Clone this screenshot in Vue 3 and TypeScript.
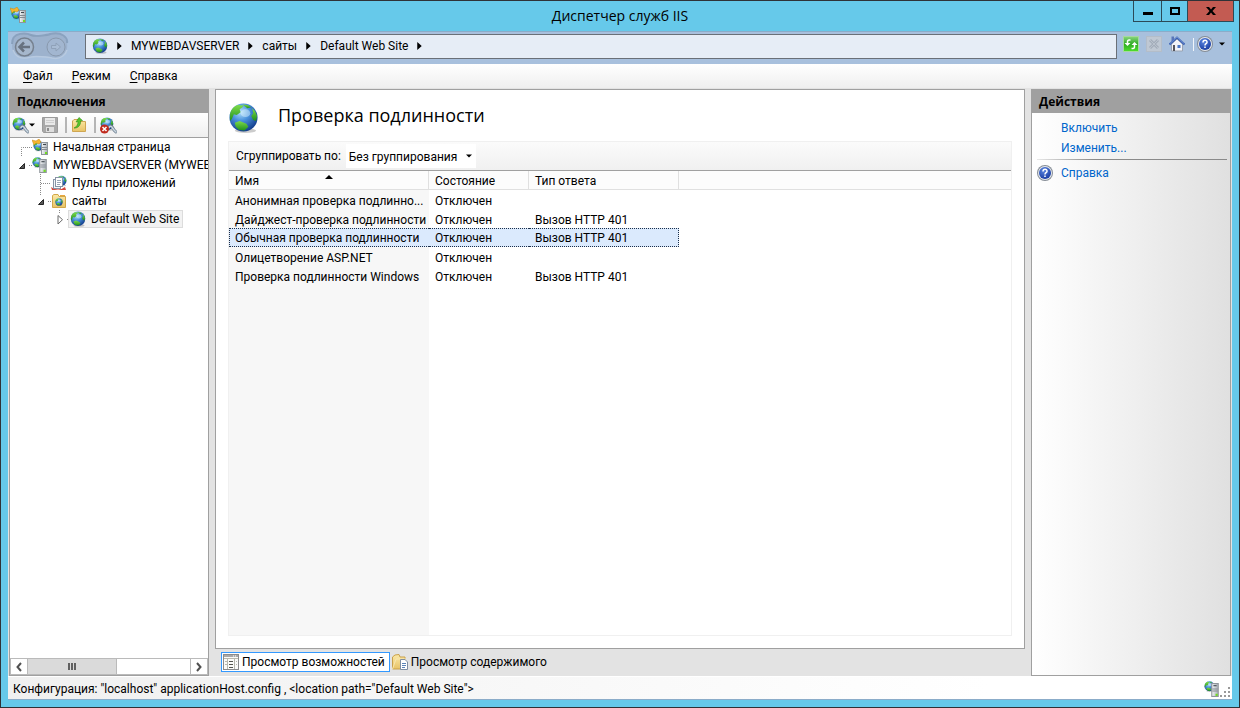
<script setup lang="ts">
import { ref } from 'vue'

interface TreeNode {
  label: string
  icon: string
  level: number
  twig: string
  state: 'open' | 'closed' | 'leaf'
}
interface AuthMethod {
  name: string
  state: string
  response: string
}

const crumbs = ['MYWEBDAVSERVER', 'сайты', 'Default Web Site']
const menus = [
  { key: 'Ф', rest: 'айл' },
  { key: 'Р', rest: 'ежим' },
  { key: 'С', rest: 'правка' },
]
const nodes: TreeNode[] = [
  { label: 'Начальная страница', icon: 'home-server', level: 0, twig: 'M2.5 18V9.5H13', state: 'leaf' },
  { label: 'MYWEBDAVSERVER (MYWEBDAVSERVER\\admin)', icon: 'server', level: 0, twig: 'M10 9.5H13', state: 'open' },
  { label: 'Пулы приложений', icon: 'pools', level: 1, twig: 'M2.5 0V18M3 9.5H13', state: 'leaf' },
  { label: 'сайты', icon: 'sites', level: 1, twig: 'M10 9.5H13M2.5 0V4', state: 'open' },
  { label: 'Default Web Site', icon: 'globe', level: 2, twig: 'M10 9.5H13M2.5 0V3', state: 'closed' },
]
const methods: AuthMethod[] = [
  { name: 'Анонимная проверка подлинно...', state: 'Отключен', response: '' },
  { name: 'Дайджест-проверка подлинности', state: 'Отключен', response: 'Вызов HTTP 401' },
  { name: 'Обычная проверка подлинности', state: 'Отключен', response: 'Вызов HTTP 401' },
  { name: 'Олицетворение ASP.NET', state: 'Отключен', response: '' },
  { name: 'Проверка подлинности Windows', state: 'Отключен', response: 'Вызов HTTP 401' },
]
const selectedNode = ref(4)
const selectedMethod = ref(2)
const grouping = ref('none')
const view = ref('features')
</script>

<template>
  <svg class="defs" width="0" height="0" aria-hidden="true">
    <defs>
      <radialGradient id="sea" cx="0.4" cy="0.3" r="0.7">
        <stop offset="0" stop-color="#b5e2fb" />
        <stop offset="0.45" stop-color="#4a92dc" />
        <stop offset="1" stop-color="#143f8e" />
      </radialGradient>
      <linearGradient id="land" x1="0" y1="0" x2="0" y2="1">
        <stop offset="0" stop-color="#7fdc4a" />
        <stop offset="1" stop-color="#1f8f1c" />
      </linearGradient>
      <linearGradient id="steel" x1="0" y1="0" x2="1" y2="0">
        <stop offset="0" stop-color="#f4f6f8" />
        <stop offset="1" stop-color="#a8afb6" />
      </linearGradient>
      <linearGradient id="paper-gold" x1="0" y1="0" x2="0" y2="1">
        <stop offset="0" stop-color="#fbe9a8" />
        <stop offset="1" stop-color="#e8c366" />
      </linearGradient>
      <linearGradient id="refresh-green" x1="0" y1="0" x2="0" y2="1">
        <stop offset="0" stop-color="#8ad67e" />
        <stop offset="0.5" stop-color="#2faa22" />
        <stop offset="1" stop-color="#4fe02c" />
      </linearGradient>
      <radialGradient id="help-blue" cx="0.4" cy="0.3" r="0.8">
        <stop offset="0" stop-color="#5b86e0" />
        <stop offset="1" stop-color="#12349c" />
      </radialGradient>
    </defs>
    <symbol id="globe" viewBox="0 0 32 32">
      <ellipse cx="18" cy="29" rx="11" ry="2.5" fill="#000" opacity="0.2" />
      <circle cx="16" cy="15.5" r="14.5" fill="url(#sea)" />
      <path d="M2 12C3 7 6 4 10 2.500L16 3L15 5L12 7L13 10L9 13L6 12L4 17L2 19Z" fill="url(#land)" />
      <path d="M15 2L20 2.500L24 5L20 6Z" fill="url(#land)" />
      <path d="M25 6L28 9L30 14L29 19L26 18L24 14L26 11Z" fill="url(#land)" />
      <path d="M7 21L12 19L19 22L21 25L17 29L11 28L8 25Z" fill="url(#land)" />
      <ellipse cx="18" cy="11" rx="5" ry="4" fill="#e3f6ff" opacity="0.45" />
    </symbol>
    <symbol id="tower" viewBox="0 0 7 13">
      <rect x="0.5" y="0.5" width="6" height="12" fill="url(#steel)" stroke="#8f959b" />
      <path d="M2 2.5H5" stroke="#3f464d" />
      <path d="M1 5.5H6M1 7.5H6" stroke="#858c93" />
      <rect x="4" y="10" width="2" height="2" fill="#6fdc1e" />
    </symbol>
    <symbol id="server" viewBox="0 0 16 16">
      <use href="#globe" x="0" y="0" width="11" height="11" />
      <use href="#tower" x="7" y="2" width="8" height="14" />
    </symbol>
    <symbol id="home-server" viewBox="0 0 16 16">
      <use href="#globe" x="1" y="1" width="11" height="12" />
      <path d="M0 1L4 2L7 0L9 3L7 5L4 4L2 6Z" fill="#f5b72e" stroke="#c9821a" stroke-width="0.5" />
      <use href="#tower" x="9" y="3" width="7" height="13" />
    </symbol>
    <symbol id="pools" viewBox="0 0 16 16">
      <use href="#globe" x="5" y="0" width="11" height="12" />
      <path d="M0 12Q7 17 14 12L15 15H1Z" fill="#d4483e" />
      <rect x="2.5" y="4.500" width="7" height="9" fill="#f4f6f9" stroke="#8793a5" />
      <rect x="4.500" y="2.500" width="7" height="9" fill="#fff" stroke="#8793a5" />
      <path d="M6 5.500H10M6 7.500H10M6 9.500H9" stroke="#9aa6b6" />
    </symbol>
    <symbol id="sites" viewBox="0 0 16 16">
      <path d="M1.5 14.500V2.500L3 1.500H7L8 3.500H14.500V14.500Z" fill="url(#paper-gold)" stroke="#d3a748" />
      <path d="M9 2.500H14" stroke="#e8a63e" />
      <use href="#globe" x="4" y="5" width="8" height="8" />
    </symbol>
    <symbol id="connect" viewBox="0 0 17 17">
      <use href="#globe" x="0" y="0" width="14" height="14" />
      <path d="M8 11Q11 7 12.500 10.500L14 13L16 15" fill="none" stroke="#6d7d8d" stroke-width="3" stroke-linecap="round" />
      <path d="M9 10.500Q11 8 12.500 11L14 13L16 15" fill="none" stroke="#cbd8e2" stroke-width="1.500" stroke-linecap="round" />
    </symbol>
    <symbol id="help" viewBox="0 0 16 16">
      <circle cx="8" cy="8" r="8" fill="#868d96" />
      <circle cx="8" cy="8" r="7" fill="#e5e9ee" />
      <circle cx="8" cy="8" r="6" fill="url(#help-blue)" />
      <path d="M6 6.500C6 3.500 10.300 3.700 10 6.300C9.800 7.800 8 7.700 8 9.500M8 10.500V12" fill="none" stroke="#fff" stroke-width="1.500" />
    </symbol>
    <symbol id="right" viewBox="0 0 5 9"><path d="M0 0L5 4.500L0 9Z" /></symbol>
    <symbol id="down" viewBox="0 0 6 4"><path d="M0 0.500H6L3 3.500Z" /></symbol>
  </svg>

  <div class="window">
    <header class="title-bar">
      <svg class="icon app-icon"><use href="#home-server" /></svg>
      <h1>Диспетчер служб IIS</h1>
      <div class="window-buttons">
        <button type="button" aria-label="Свернуть"><svg width="12" height="12"><path d="M1 7H11V10H1Z" /></svg></button>
        <button type="button" aria-label="Развернуть"><svg width="12" height="12"><path d="M2 3H10V9H2Z" fill="none" stroke="#000" stroke-width="2" /></svg></button>
        <button type="button" class="close" aria-label="Закрыть"><svg width="12" height="12"><path d="M1 2H4L6 4.500L8 2H11L7.500 6L11 10H8L6 7.500L4 10H1L4.500 6Z" /></svg></button>
      </div>
    </header>

    <nav class="address-bar" aria-label="Адрес">
      <div class="history">
        <svg width="58" height="28" viewBox="0 0 58 28">
          <path d="M13 2C19 2 20 4 29 4S39 2 45 2C60 2 60 26 45 26C39 26 37 24 29 24S19 26 13 26C-3 26 -3 2 13 2Z" fill="#9db2cd" />
          <path d="M1 12C1 -1 16 1 20 3S37 3 39 2C51 -1 57 6 56 11" fill="none" stroke="#7d95b2" stroke-width="2" opacity="0.7" />
          <path d="M2 18C6 29 16 26 20 25S38 25 41 26C50 28 55 22 56 18" fill="none" stroke="#b8cae0" stroke-width="1.500" />
          <circle cx="13.500" cy="15" r="9" fill="#a6b7cc" stroke="#76818f" stroke-width="1.500" />
          <path d="M19 15H9M13 10.500L8.500 15L13 19.500" fill="none" stroke="#68727f" stroke-width="2.500" />
          <circle cx="45" cy="15" r="9" fill="#a2b6d0" stroke="#8999ad" />
          <path d="M40.500 13.500H45V11L49.500 15L45 19V16.500H40.500Z" fill="#a9bcd4" stroke="#8fa1b8" />
        </svg>
      </div>
      <div class="path">
        <svg class="icon"><use href="#globe" /></svg>
        <template v-for="crumb in crumbs" :key="crumb">
          <svg class="step"><use href="#right" /></svg>
          <button type="button">{{ crumb }}</button>
        </template>
        <svg class="step"><use href="#right" /></svg>
      </div>
      <div class="address-tools">
        <button type="button" aria-label="Обновить">
          <svg class="icon" viewBox="0 0 16 16">
            <rect x="0.5" y="0.5" width="15" height="15" fill="url(#refresh-green)" stroke="#a5d99d" />
            <path d="M7.500 4H6Q4.500 4 4.500 6V8" fill="none" stroke="#fff" stroke-width="1.500" />
            <path d="M1.500 7H7.500L4.500 10Z" fill="#fff" />
            <path d="M8.500 12.500H10Q11.500 12.500 11.500 10.500V8" fill="none" stroke="#fff" stroke-width="1.500" />
            <path d="M8.500 9H14.500L11.500 6Z" fill="#fff" />
          </svg>
        </button>
        <button type="button" aria-label="Остановить">
          <svg class="icon" viewBox="0 0 16 16">
            <rect x="0.500" y="0.500" width="15" height="15" fill="#bfc8d3" stroke="#b3bdc9" />
            <path d="M4 4L12 12M12 4L4 12" stroke="#a3adba" stroke-width="3" />
            <path d="M4 4L12 12M12 4L4 12" stroke="#b9c2cd" />
          </svg>
        </button>
        <button type="button" aria-label="Домой">
          <svg class="icon" viewBox="0 0 16 16">
            <path d="M2.500 8V15H13.500V8L8 3Z" fill="#f1f3f8" stroke="#9aa3b2" />
            <path d="M2.500 0.500H5V5H2.500Z" fill="#5a76b8" />
            <path d="M0.500 8.500L8 1.500L15.500 8.500" fill="none" stroke="#3c62b4" stroke-width="2" />
            <path d="M1 7.500L8 1L15 7.500" fill="none" stroke="#9db8e8" stroke-width="0.500" />
            <rect x="4" y="9" width="2" height="6" fill="#54545c" />
            <rect x="8.500" y="9" width="3" height="3" fill="#4a76c6" />
          </svg>
        </button>
        <span class="divider"></span>
        <button type="button" class="help-menu" aria-label="Справка">
          <svg class="icon"><use href="#help" /></svg>
          <svg class="drop"><use href="#down" /></svg>
        </button>
      </div>
    </nav>

    <nav class="menu-bar" aria-label="Меню">
      <button v-for="menu in menus" :key="menu.key" type="button"><u>{{ menu.key }}</u>{{ menu.rest }}</button>
    </nav>

    <div class="body">
      <aside class="pane connections">
        <h2>Подключения</h2>
        <div class="pane-tools">
          <button type="button" aria-label="Создать подключение">
            <svg class="tool"><use href="#connect" /></svg>
            <svg class="drop"><use href="#down" /></svg>
          </button>
          <button type="button" class="save" aria-label="Сохранить">
            <svg class="icon" viewBox="0 0 16 16">
              <path d="M0.500 0.500H15.500V15.500H1.500L0.500 14Z" fill="#a9a9a9" stroke="#9b9b9b" />
              <rect x="3" y="1" width="10" height="7" fill="#e9e9e9" />
              <path d="M4 3.500H12M4 5.500H12" stroke="#cfcfcf" />
              <rect x="4" y="10" width="8" height="5" fill="#dedede" />
              <rect x="5" y="11" width="2" height="3" fill="#8c8c8c" />
            </svg>
          </button>
          <span class="divider"></span>
          <button type="button" aria-label="Вверх">
            <svg class="icon" viewBox="0 0 16 16">
              <path d="M1.500 14.500V4L3 2.500H8L9 4.500H14.500V14.500Z" fill="url(#paper-gold)" stroke="#cfa652" />
              <path d="M3 11C6 10 7 7 7 4.500L5 5L8 0.500L11.500 3.500L9.500 4C10 8 7 11.500 3 11Z" fill="#58c52b" stroke="#2e8f1a" stroke-width="0.600" />
            </svg>
          </button>
          <span class="divider"></span>
          <button type="button" aria-label="Удалить подключение">
            <svg class="tool" viewBox="0 0 17 17">
              <use href="#connect" width="17" height="17" />
              <circle cx="4.500" cy="12" r="4.500" fill="#c02a1d" />
              <path d="M2.500 10L6.500 14M6.500 10L2.500 14" stroke="#fff" stroke-width="1.500" />
            </svg>
          </button>
        </div>
        <ul class="tree">
          <li v-for="(node, index) in nodes" :key="node.label" :class="'level-' + node.level">
            <svg class="twig" viewBox="0 0 13 18">
              <path :d="node.twig" fill="none" stroke="#8a8a8a" stroke-dasharray="1 1" />
              <path v-if="node.state === 'open'" d="M0.500 12.500H5.500V7.500Z" fill="#595959" stroke="#262626" />
              <path v-if="node.state === 'closed'" d="M1 5.500V14L5.500 9.700Z" fill="#fff" stroke="#6b6b6b" />
            </svg>
            <button type="button" :class="{ selected: selectedNode === index }" @click="selectedNode = index">
              <svg class="icon"><use :href="'#' + node.icon" /></svg>
              <span>{{ node.label }}</span>
            </button>
          </li>
        </ul>
        <div class="scrollbar">
          <button type="button" aria-label="Прокрутить влево"><svg width="6" height="10"><path d="M5 1L1.500 5L5 9" /></svg></button>
          <div class="track"><div class="thumb"><i></i><i></i><i></i></div></div>
          <button type="button" aria-label="Прокрутить вправо"><svg width="6" height="10"><path d="M1 1L4.500 5L1 9" /></svg></button>
        </div>
      </aside>

      <main class="center">
        <section class="page">
          <div class="page-title">
            <svg class="big-icon"><use href="#globe" /></svg>
            <h2>Проверка подлинности</h2>
          </div>
          <div class="list">
            <div class="group-bar">
              <label for="grouping">Сгруппировать по:</label>
              <div class="select-box">
                <select id="grouping" v-model="grouping">
                  <option value="none">Без группирования</option>
                </select>
                <svg class="drop"><use href="#down" /></svg>
              </div>
            </div>
            <div class="list-body">
              <table>
                <thead>
                  <tr>
                    <th class="name" aria-sort="ascending">Имя<svg class="sort" width="8" height="4"><path d="M0 4L4 0L8 4Z" /></svg></th>
                    <th class="state">Состояние</th>
                    <th class="response">Тип ответа</th>
                    <th></th>
                  </tr>
                </thead>
                <tbody>
                  <tr v-for="(method, index) in methods" :key="method.name" :class="{ selected: selectedMethod === index }" @click="selectedMethod = index">
                    <td>{{ method.name }}</td>
                    <td>{{ method.state }}</td>
                    <td>{{ method.response }}</td>
                    <td></td>
                  </tr>
                </tbody>
              </table>
            </div>
          </div>
        </section>
        <div class="views">
          <button type="button" :class="{ active: view === 'features' }" @click="view = 'features'">
            <svg class="icon" viewBox="0 0 16 16">
              <rect x="0.500" y="0.500" width="15" height="15" fill="#fbfbf8" stroke="#8b8b8b" />
              <path d="M1 2H15" stroke="#a9a9a9" stroke-width="2" />
              <path d="M10 2H14" stroke="#fff" stroke-dasharray="1 1" />
              <path d="M1 4.500H15M4.500 5V15M11.500 5V15" stroke="#b8b8ae" />
              <path d="M6 7.500H10M6 10.500H10M6 13.500H10" stroke="#55554e" />
              <path d="M2 7.500H4M2 10.500H4M13 7.500H14M13 10.500H14" stroke="#b8b8ae" />
            </svg>
            <span>Просмотр возможностей</span>
          </button>
          <button type="button" :class="{ active: view === 'content' }" @click="view = 'content'">
            <svg class="icon" viewBox="0 0 16 16">
              <path d="M0.500 15V3L3 1L7 0.500L8 3H13V15Z" fill="url(#paper-gold)" stroke="#c9a04a" />
              <path d="M0.500 15L4 5H14" fill="none" stroke="#f8e6b0" />
              <path d="M8.500 5.500H13L15.500 8V15.500H8.500Z" fill="#fff" stroke="#7f8ea3" />
              <path d="M10 9.500H14M10 11.500H14M10 13.500H13" stroke="#5c84b8" />
            </svg>
            <span>Просмотр содержимого</span>
          </button>
        </div>
      </main>

      <aside class="pane actions">
        <h2>Действия</h2>
        <div class="action-list">
          <a href="#enable">Включить</a>
          <a href="#edit">Изменить...</a>
          <hr />
          <a href="#help-topic" class="help-link"><svg class="icon"><use href="#help" /></svg>Справка</a>
        </div>
      </aside>
    </div>

    <footer class="status">
      <span>Конфигурация: "localhost" applicationHost.config , &lt;location path="Default Web Site"&gt;</span>
      <svg class="icon"><use href="#server" /></svg>
      <svg class="grip" width="10" height="10"><path d="M8 0H10V2H8ZM4 4H6V6H4ZM8 4H10V6H8ZM0 8H2V10H0ZM4 8H6V10H4ZM8 8H10V10H8Z" fill="#999" /></svg>
    </footer>
  </div>
</template>

<style>
body {
  margin: 0;
}
</style>

<style scoped>
* {
  box-sizing: border-box;
}
.defs {
  position: absolute;
}
.window {
  display: flex;
  flex-direction: column;
  min-height: 100vh;
  padding: 0 7px 7px;
  border: 1px solid #2f3237;
  background: #66c9ea;
  font: 12px/18px Roboto, "Open Sans", "Noto Sans", sans-serif;
  color: #000;
}
button {
  display: flex;
  align-items: center;
  margin: 0;
  padding: 0;
  border: 0;
  background: none;
  font: inherit;
  color: inherit;
  white-space: nowrap;
}
svg {
  flex: none;
}
h1,
h2 {
  margin: 0;
}
.icon {
  width: 16px;
  height: 16px;
}
.drop {
  width: 6px;
  height: 4px;
}
.title-bar {
  display: grid;
  grid-template-columns: 1fr auto 1fr;
  height: 30px;
}
.app-icon {
  margin: 6px 2px;
}
h1 {
  font-family: "Open Sans", "Noto Sans", sans-serif;
  font-size: 14px;
  font-weight: 400;
  line-height: 29px;
}
.window-buttons {
  display: flex;
  justify-self: end;
  height: 21px;
  margin-right: -2px;
  border: 1px solid #2b4a57;
  border-top: 0;
}
.window-buttons button {
  justify-content: center;
  width: 28px;
  border-right: 1px solid #2b4a57;
}
.window-buttons button + button {
  width: 26px;
}
.window-buttons .close {
  width: 45px;
  border-right: 0;
  background: #c35b52;
}
.address-bar {
  display: flex;
  align-items: center;
  height: 33px;
  padding: 0 7px 4px 3px;
  border-top: 1px solid #8bacc9;
  background: #a8c0dd;
}
.history {
  display: flex;
  width: 74px;
}
.path {
  display: flex;
  flex: 1;
  align-items: center;
  height: 25px;
  padding: 0 6px;
  border: 1px solid #6a7078;
  background: #e6edf6;
}
.step {
  width: 5px;
  height: 8px;
  margin: 0 9px;
}
.address-tools {
  display: flex;
  align-items: center;
  gap: 7px;
  padding: 0 0 4px 6px;
}
.address-tools .divider {
  width: 1px;
  height: 13px;
  margin-left: 1px;
  background: #f1f5fa;
}
.help-menu {
  gap: 6px;
  margin-left: -4px;
}
.menu-bar {
  display: flex;
  gap: 19px;
  height: 24px;
  padding: 0 15px;
  background: linear-gradient(#fff, #efefef);
}
u {
  text-underline-offset: 2px;
}
.body {
  display: flex;
  flex: 1;
  gap: 6px;
  padding: 1px 1px 0;
  background: #e3e3e3;
}
.pane {
  display: flex;
  flex: none;
  flex-direction: column;
  width: 200px;
  border: 1px solid #a0a0a0;
  background: #fff;
}
.pane h2 {
  height: 23px;
  padding-left: 7px;
  background: #a0a0a0;
  font-size: 12px;
  font-family: "Open Sans", "Noto Sans", sans-serif;
  font-weight: 700;
  line-height: 23px;
}
.pane-tools {
  display: flex;
  align-items: center;
  height: 25px;
  padding-left: 2px;
  border-bottom: 1px solid #a0a0a0;
  background: linear-gradient(#fff, #efefef);
}
.pane-tools .tool {
  width: 17px;
  height: 17px;
}
.pane-tools .save {
  margin-left: 7px;
}
.pane-tools .divider {
  width: 2px;
  height: 16px;
  margin-left: 7px;
  margin-right: 4px;
  background: #b5b5b5;
}
.tree {
  flex: 1;
  margin: 0;
  padding: 0;
  overflow: hidden;
  list-style: none;
}
.tree li {
  display: flex;
  height: 18px;
  padding-left: 9px;
}
.tree .level-1 {
  padding-left: 28px;
}
.tree .level-2 {
  padding-left: 47px;
}
.twig {
  width: 13px;
  height: 18px;
}
.tree button {
  gap: 5px;
}
.tree button.selected {
  margin-left: -2px;
  padding: 0 3px 0 1px;
  border: 1px solid #dcdcdc;
  background: #f2f2f2;
}
.scrollbar {
  display: flex;
  height: 17px;
  border: 1px solid #bababa;
}
.scrollbar button {
  justify-content: center;
  width: 16px;
}
.scrollbar path {
  fill: none;
  stroke: #505050;
  stroke-width: 2;
}
.track {
  flex: 1;
  border: solid #bababa;
  border-width: 0 1px;
}
.thumb {
  display: flex;
  justify-content: center;
  align-items: center;
  gap: 1px;
  width: 55%;
  height: 100%;
  border-right: 1px solid #bababa;
  background: #dadada;
}
.thumb i {
  width: 2px;
  height: 7px;
  background: #606060;
}
.center {
  display: flex;
  flex: 1;
  flex-direction: column;
  min-width: 0;
}
.page {
  display: flex;
  flex: 1;
  flex-direction: column;
  padding: 12px;
  border: 1px solid #a0a0a0;
  background: #fff;
}
.page-title {
  display: flex;
  gap: 19px;
  height: 39px;
}
.big-icon {
  width: 31px;
  height: 32px;
}
.page-title h2 {
  font-family: "Open Sans", "Noto Sans", sans-serif;
  font-size: 18px;
  font-weight: 400;
  line-height: 26px;
}
.list {
  display: flex;
  flex: 1;
  flex-direction: column;
  border: 1px solid #f0f0f0;
}
.group-bar {
  display: flex;
  align-items: center;
  gap: 5px;
  height: 29px;
  padding-left: 7px;
  border-bottom: 1px solid #a0a0a0;
  background: linear-gradient(#fbfbfb, #f0f0f0);
}
.select-box {
  display: flex;
  align-items: center;
  height: 24px;
  padding-right: 4px;
  background: #fff;
}
select {
  width: 120px;
  padding: 1px 0 0 3px;
  border: 0;
  appearance: none;
  background: none;
  font: inherit;
  color: inherit;
}
.list-body {
  flex: 1;
  background: linear-gradient(to right, #f7f7f7 200px, #fff 200px);
}
table {
  width: 100%;
  border-collapse: separate;
  border-spacing: 0;
  table-layout: fixed;
}
th,
td {
  height: 19px;
  padding: 2px 0 0 6px;
  font-weight: 400;
  line-height: 16px;
  text-align: left;
  white-space: nowrap;
}
th {
  padding-top: 3px;
  border-right: 1px solid #e0e0e0;
  border-bottom: 1px solid #e0e0e0;
  background: #fcfcfc;
  line-height: 15px;
}
th:last-child {
  border-right: 0;
}
.name {
  position: relative;
  width: 200px;
}
.state {
  width: 100px;
}
.response {
  width: 150px;
}
.sort {
  position: absolute;
  top: 4px;
  left: 50%;
  margin-left: -4px;
}
tr.selected td:not(:last-child) {
  padding-top: 1px;
  border: dotted #1c2f4a;
  border-width: 1px 0;
  background: #dbeafd;
}
tr.selected td:first-child {
  padding-left: 5px;
  border-left-width: 1px;
}
tr.selected td:nth-child(3) {
  border-right-width: 1px;
}
.views {
  display: flex;
  gap: 2px;
  height: 27px;
  padding: 3px 6px;
}
.views button {
  gap: 3px;
  height: 20px;
  padding-right: 4px;
}
.views button.active {
  padding: 0 4px 0 1px;
  border: 1px solid #3399ff;
  background: #fff;
}
.actions {
  background: linear-gradient(to right, #fff, #e0e0e0);
}
.action-list {
  display: flex;
  flex-direction: column;
  gap: 2px;
  padding: 6px 3px 0 5px;
}
a {
  padding-left: 24px;
  color: #0066cc;
  text-decoration: none;
}
hr {
  width: 100%;
  height: 1px;
  margin: 0 0 2px;
  border: 0;
  background: linear-gradient(to right, #e8e8e8, #8a8a8a 30%);
}
.help-link {
  display: flex;
  align-items: center;
  gap: 8px;
  padding-left: 0;
}
.status {
  display: flex;
  align-items: center;
  height: 24px;
  padding: 2px 2px 0 5px;
  border-top: 1px solid #fff;
  border-bottom: 1px solid #8bacc9;
  background: linear-gradient(to right, #f0f0f0, #fff 80%);
}
.status span {
  flex: 1;
}
.grip {
  align-self: flex-end;
  margin: 0 0 2px;
}
</style>
